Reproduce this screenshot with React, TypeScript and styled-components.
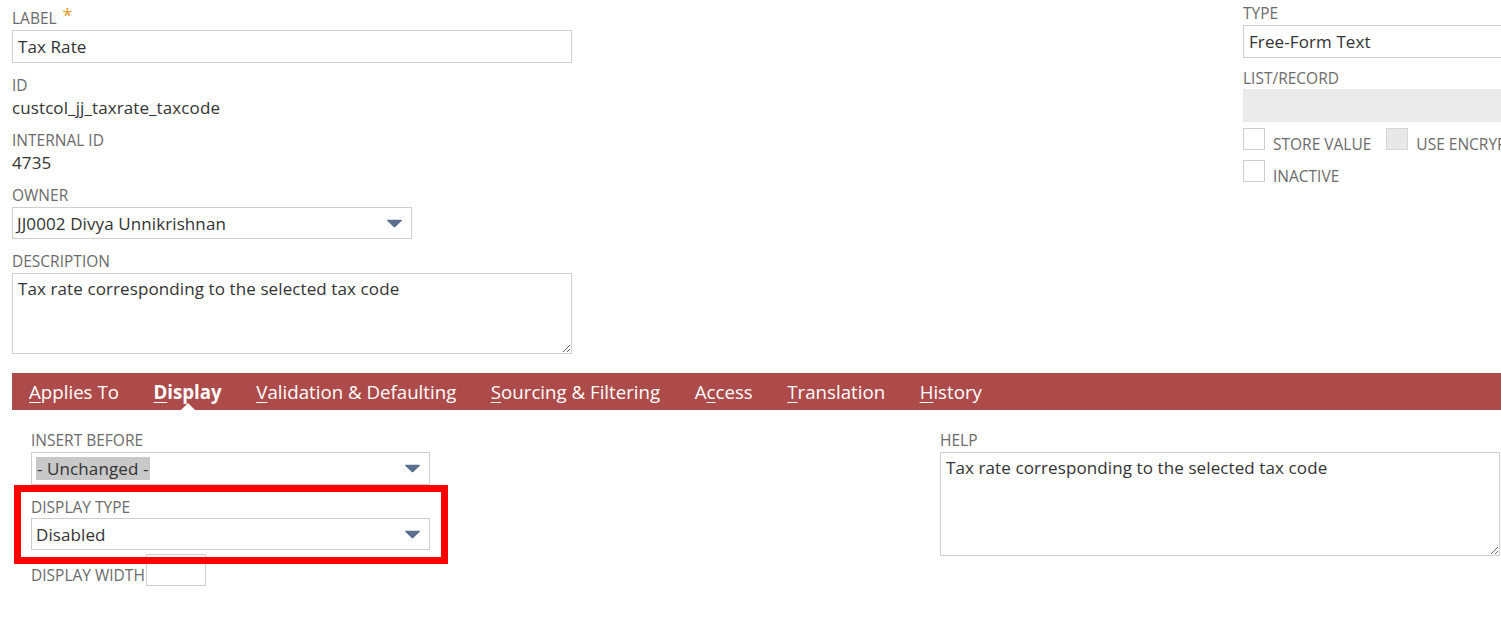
import React from "react";
import styled, { createGlobalStyle } from "styled-components";

const GlobalStyle = createGlobalStyle`
  body {
    margin: 0;
    background: #ffffff;
    font-family: "Open Sans", "Liberation Sans", sans-serif;
    overflow: hidden;
  }
`;

const Page = styled.div`
  width: 1501px;
  height: 626px;
  overflow: hidden;
  background: #fff;
`;

const TopSection = styled.div`
  display: flex;
  justify-content: space-between;
  align-items: flex-start;
  padding-left: 12px;
`;

const Column = styled.div<{ $width: number; $top: number; $gap: number; $clip?: boolean }>`
  width: ${(p) => p.$width}px;
  padding-top: ${(p) => p.$top}px;
  padding-bottom: ${(p) => (p.$clip ? 8 : 0)}px;
  display: flex;
  flex-direction: column;
  gap: ${(p) => p.$gap}px;
  overflow: ${(p) => (p.$clip ? "hidden" : "visible")};
`;

const Field = styled.div<{ $gap?: number }>`
  display: flex;
  flex-direction: column;
  gap: ${(p) => (p.$gap ?? 2)}px;
`;

const Label = styled.span`
  font-size: 15.5px;
  line-height: 19px;
  color: #6b6b6b;
  text-transform: uppercase;
  white-space: nowrap;
`;

const Required = styled.span`
  color: #e39c2a;
  font-size: 18px;
  margin-left: 6px;
  position: relative;
  top: -2px;
`;

const Value = styled.span`
  font-size: 17px;
  line-height: 21px;
  letter-spacing: 0.1px;
  color: #333;
`;

const TextInput = styled.input<{ $width: number }>`
  box-sizing: border-box;
  width: ${(p) => p.$width}px;
  height: 33px;
  border: 1px solid #cfcfcf;
  padding: 0 5px;
  margin: 0;
  font-family: inherit;
  font-size: 17px;
  letter-spacing: 0.1px;
  color: #333;
  background: #fff;
  outline: none;
`;

const GrayBox = styled.div`
  height: 33px;
  background: #ebebeb;
`;

const TextArea = styled.textarea<{ $width: number; $height: number }>`
  box-sizing: border-box;
  width: ${(p) => p.$width}px;
  height: ${(p) => p.$height}px;
  border: 1px solid #cfcfcf;
  padding: 3px 5px;
  margin: 0;
  font-family: inherit;
  font-size: 17px;
  letter-spacing: 0.1px;
  line-height: 23px;
  color: #333;
  resize: both;
  outline: none;
  display: block;
`;

const SelectBox = styled.div<{ $width: number; $height?: number }>`
  box-sizing: border-box;
  width: ${(p) => p.$width}px;
  height: ${(p) => p.$height ?? 33}px;
  border: 1px solid #cfcfcf;
  display: flex;
  align-items: center;
  justify-content: space-between;
  padding: 0 8px 0 4px;
  font-size: 17px;
  letter-spacing: 0.1px;
  color: #333;
  background: #fff;
`;

const Highlighted = styled.span`
  background: #c8c8c8;
  line-height: 23px;
  padding: 0 1px;
`;

const CheckRow = styled.div<{ $top: number }>`
  display: flex;
  align-items: flex-end;
  margin-top: ${(p) => p.$top}px;
  white-space: nowrap;
`;

const CheckBox = styled.span<{ $disabled?: boolean }>`
  box-sizing: border-box;
  width: 22px;
  height: 22px;
  border: 1px solid ${(p) => (p.$disabled ? "#d6d6d6" : "#cfcfcf")};
  background: ${(p) => (p.$disabled ? "#e8e8e8" : "#fff")};
  flex: none;
  margin-right: 8px;
`;

const CheckLabel = styled(Label)`
  line-height: 19px;
  margin-bottom: -4px;
  margin-right: 15px;
`;

const TabBar = styled.div`
  margin: 19px 0 0 12px;
  height: 37px;
  background: #ad4a4a;
  display: flex;
  align-items: center;
  gap: 34.5px;
  padding-left: 17px;
`;

const Tab = styled.span<{ $active?: boolean }>`
  position: relative;
  height: 100%;
  display: flex;
  align-items: center;
  font-size: 18.7px;
  color: #fff;
  font-weight: ${(p) => (p.$active ? 700 : 400)};
  white-space: nowrap;

  u {
    text-decoration-thickness: 1px;
    text-underline-offset: 3px;
  }
`;

const Caret = styled.span`
  position: absolute;
  bottom: 0;
  left: 50%;
  transform: translateX(-50%);
  width: 0;
  height: 0;
  border-left: 7px solid transparent;
  border-right: 7px solid transparent;
  border-bottom: 7px solid #fff;
`;

const BottomSection = styled.div`
  display: grid;
  grid-template-columns: 399px 561px;
  column-gap: 510px;
  padding: 21px 0 0 31px;
  align-items: start;
`;

const HighlightField = styled(Field)`
  position: relative;

  &::after {
    content: "";
    position: absolute;
    left: -17px;
    top: -13px;
    width: 434px;
    height: 79px;
    box-sizing: border-box;
    border: 7px solid #ff0000;
    pointer-events: none;
  }
`;

const InlineField = styled.div`
  display: flex;
  align-items: flex-end;
  margin-top: -9px;
`;

const SmallInput = styled(TextInput)`
  height: 32px;
  margin-bottom: -1px;
  margin-left: 1px;
`;

const Arrow = () => (
  <svg width="17" height="9" viewBox="0 0 17 9">
    <path
      d="M1.5 0.8 H15.5 Q16.6 0.8 15.8 1.7 L9.3 8 Q8.5 8.7 7.7 8 L1.2 1.7 Q0.4 0.8 1.5 0.8 Z"
      fill="#5b7091"
    />
  </svg>
);

const tabs: { key: string; rest: string; pre?: string; active?: boolean }[] = [
  { key: "A", rest: "pplies To" },
  { key: "D", rest: "isplay", active: true },
  { key: "V", rest: "alidation & Defaulting" },
  { key: "S", rest: "ourcing & Filtering" },
  { pre: "A", key: "c", rest: "cess" },
  { key: "T", rest: "ranslation" },
  { key: "H", rest: "istory" },
];

const description = "Tax rate corresponding to the selected tax code";

export default function App() {
  return (
    <Page>
      <GlobalStyle />
      <TopSection>
        <Column $width={560} $top={8} $gap={13}>
          <Field>
            <Label>
              Label<Required>*</Required>
            </Label>
            <TextInput $width={560} readOnly value="Tax Rate" />
          </Field>
          <Field>
            <Label>ID</Label>
            <Value>custcol_jj_taxrate_taxcode</Value>
          </Field>
          <Field>
            <Label>Internal ID</Label>
            <Value>4735</Value>
          </Field>
          <Field>
            <Label>Owner</Label>
            <SelectBox $width={400} $height={32}>
              <span>JJ0002 Divya Unnikrishnan</span>
              <Arrow />
            </SelectBox>
          </Field>
          <Field>
            <Label>Description</Label>
            <TextArea $width={560} $height={81} readOnly defaultValue={description} />
          </Field>
        </Column>

        <Column $width={258} $top={4} $gap={11} $clip>
          <Field>
            <Label>Type</Label>
            <TextInput $width={280} readOnly value="Free-Form Text" />
          </Field>
          <Field $gap={1}>
            <Label>List/Record</Label>
            <GrayBox />
            <CheckRow $top={5}>
              <CheckBox />
              <CheckLabel>Store Value</CheckLabel>
              <CheckBox $disabled />
              <CheckLabel>Use Encrypted Format</CheckLabel>
            </CheckRow>
            <CheckRow $top={9}>
              <CheckBox />
              <CheckLabel>Inactive</CheckLabel>
            </CheckRow>
          </Field>
        </Column>
      </TopSection>

      <TabBar>
        {tabs.map((t) => (
          <Tab key={t.rest} $active={t.active}>
            <span>
              {t.pre}
              <u>{t.key}</u>
              {t.rest}
            </span>
            {t.active && <Caret />}
          </Tab>
        ))}
      </TabBar>

      <BottomSection>
        <Column $width={399} $top={0} $gap={13}>
          <Field>
            <Label>Insert Before</Label>
            <SelectBox $width={399}>
              <Highlighted>- Unchanged -</Highlighted>
              <Arrow />
            </SelectBox>
          </Field>
          <HighlightField $gap={1}>
            <Label>Display Type</Label>
            <SelectBox $width={399} $height={32}>
              <span>Disabled</span>
              <Arrow />
            </SelectBox>
          </HighlightField>
          <InlineField>
            <Label>Display Width</Label>
            <SmallInput $width={60} readOnly value="" />
          </InlineField>
        </Column>

        <Field>
          <Label>Help</Label>
          <TextArea $width={560} $height={104} readOnly defaultValue={description} />
        </Field>
      </BottomSection>
    </Page>
  );
}
